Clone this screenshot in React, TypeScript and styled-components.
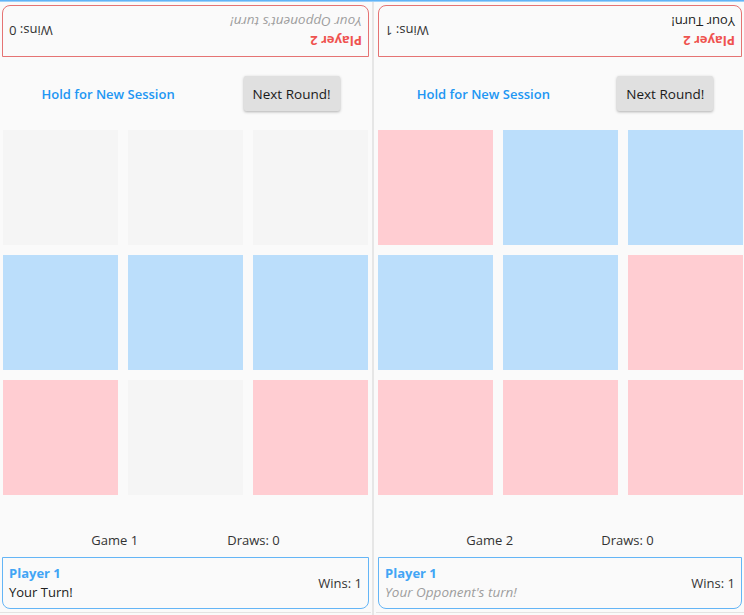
import React, {FC} from 'react';
import styled, {createGlobalStyle} from 'styled-components';

type Cell = '' | 'blue' | 'red';

interface SessionProps {
  game: number;
  draws: number;
  board: Cell[];
  p1Wins: number;
  p2Wins: number;
  p1Turn: boolean;
  width: number;
}

const RED = '#ef5350';
const RED_BORDER = '#e57373';
const BLUE = '#42a5f5';
const BLUE_BORDER = '#64b5f6';

const GlobalStyle = createGlobalStyle`
  html, body {
    margin: 0;
    padding: 0;
    background: #fafafa;
  }
  body {
    font-family: "Open Sans", "Noto Sans", sans-serif;
    color: #212121;
  }
`;

const Screen = styled.div`
  width: 744px;
  height: 615px;
  display: flex;
  flex-direction: column;
  overflow: hidden;
  background: #fafafa;
`;

const TopGlow = styled.div`
  height: 2px;
  flex: none;
  background: linear-gradient(#42a5f5, #bbdefb);
`;

const Split = styled.div`
  flex: 1;
  display: flex;
  min-height: 0;
`;

const Panel = styled.div<{$width: number}>`
  width: ${p => p.$width}px;
  flex: none;
  display: flex;
  flex-direction: column;
  padding: 3px 2px 0;
  box-sizing: border-box;
  border-bottom: 1px solid #e3e3e3;
  height: 611px;
`;

const Divider = styled.div`
  width: 5px;
  flex: none;
  display: flex;
  padding-left: 1px;
  box-sizing: border-box;

  &::before {
    content: '';
    width: 2px;
    background: #e6e6e6;
  }
`;

const PlayerCard = styled.div<{$color: string; $flipped?: boolean}>`
  height: 52px;
  flex: none;
  box-sizing: border-box;
  border: 1px solid ${p => p.$color};
  border-radius: 0 0 8px 8px;
  padding: 0 6px;
  display: flex;
  align-items: center;
  justify-content: space-between;
  transform: ${p => (p.$flipped ? 'rotate(180deg)' : 'none')};
`;

const PlayerInfo = styled.div`
  display: flex;
  flex-direction: column;
  line-height: 19px;
`;

const PlayerName = styled.div<{$color: string}>`
  color: ${p => p.$color};
  font-weight: 700;
  font-size: 13px;
`;

const TurnText = styled.div<{$active: boolean}>`
  font-size: ${p => (p.$active ? '13px' : '13.5px')};
  color: ${p => (p.$active ? '#212121' : '#9e9e9e')};
  font-style: ${p => (p.$active ? 'normal' : 'italic')};
`;

const Wins = styled.div`
  font-size: 13px;
  color: #333;
`;

const ActionRow = styled.div`
  height: 73px;
  flex: none;
  display: flex;
  align-items: center;
  justify-content: space-around;
`;

const SessionLink = styled.button`
  background: none;
  border: none;
  padding: 0 10px;
  color: #2196f3;
  font-family: inherit;
  font-size: 13px;
  font-weight: 600;
  cursor: pointer;
`;

const NextButton = styled.button`
  width: 96px;
  height: 35px;
  background: #e0e0e0;
  border: none;
  border-radius: 2px;
  box-shadow: 0 1px 3px rgba(0, 0, 0, 0.3);
  font-family: inherit;
  font-size: 13.5px;
  color: #1a1a1a;
  padding: 0;
  cursor: pointer;
`;

const Board = styled.div`
  display: grid;
  grid-template-columns: repeat(3, 115px);
  grid-template-rows: repeat(3, 115px);
  gap: 10px;
  justify-content: center;
  flex: none;
`;

const Square = styled.div<{$cell: Cell}>`
  background: ${p =>
    p.$cell === 'blue' ? '#bbdefb' : p.$cell === 'red' ? '#ffcdd2' : '#f5f5f5'};
`;

const StatusRow = styled.div`
  height: 62px;
  flex: none;
  display: flex;
  align-items: flex-end;
  justify-content: space-evenly;
  padding-bottom: 7px;
  box-sizing: border-box;
  font-size: 13px;
  line-height: 20px;
  color: #333;
`;

const Session: FC<SessionProps> = props => {
  const {game, draws, board, p1Wins, p2Wins, p1Turn, width} = props;

  return (
    <Panel $width={width}>
      <PlayerCard $color={RED_BORDER} $flipped>
        <PlayerInfo>
          <PlayerName $color={RED}>Player 2</PlayerName>
          <TurnText $active={!p1Turn}>
            {p1Turn ? "Your Opponent's turn!" : 'Your Turn!'}
          </TurnText>
        </PlayerInfo>
        <Wins>Wins: {p2Wins}</Wins>
      </PlayerCard>

      <ActionRow>
        <SessionLink>Hold for New Session</SessionLink>
        <NextButton>Next Round!</NextButton>
      </ActionRow>

      <Board>
        {board.map((cell, i) => (
          <Square key={i} $cell={cell} />
        ))}
      </Board>

      <StatusRow>
        <span>Game {game}</span>
        <span>Draws: {draws}</span>
      </StatusRow>

      <PlayerCard $color={BLUE_BORDER}>
        <PlayerInfo>
          <PlayerName $color={BLUE}>Player 1</PlayerName>
          <TurnText $active={p1Turn}>
            {p1Turn ? 'Your Turn!' : "Your Opponent's turn!"}
          </TurnText>
        </PlayerInfo>
        <Wins>Wins: {p1Wins}</Wins>
      </PlayerCard>
    </Panel>
  );
};

const App: FC = () => (
  <>
    <GlobalStyle />
    <Screen>
      <TopGlow />
      <Split>
        <Session
          width={371}
          game={1}
          draws={0}
          p1Wins={1}
          p2Wins={0}
          p1Turn
          board={['', '', '', 'blue', 'blue', 'blue', 'red', '', 'red']}
        />
        <Divider />
        <Session
          width={368}
          game={2}
          draws={0}
          p1Wins={1}
          p2Wins={1}
          p1Turn={false}
          board={['red', 'blue', 'blue', 'blue', 'blue', 'red', 'red', 'red', 'red']}
        />
      </Split>
    </Screen>
  </>
);

export default App;
